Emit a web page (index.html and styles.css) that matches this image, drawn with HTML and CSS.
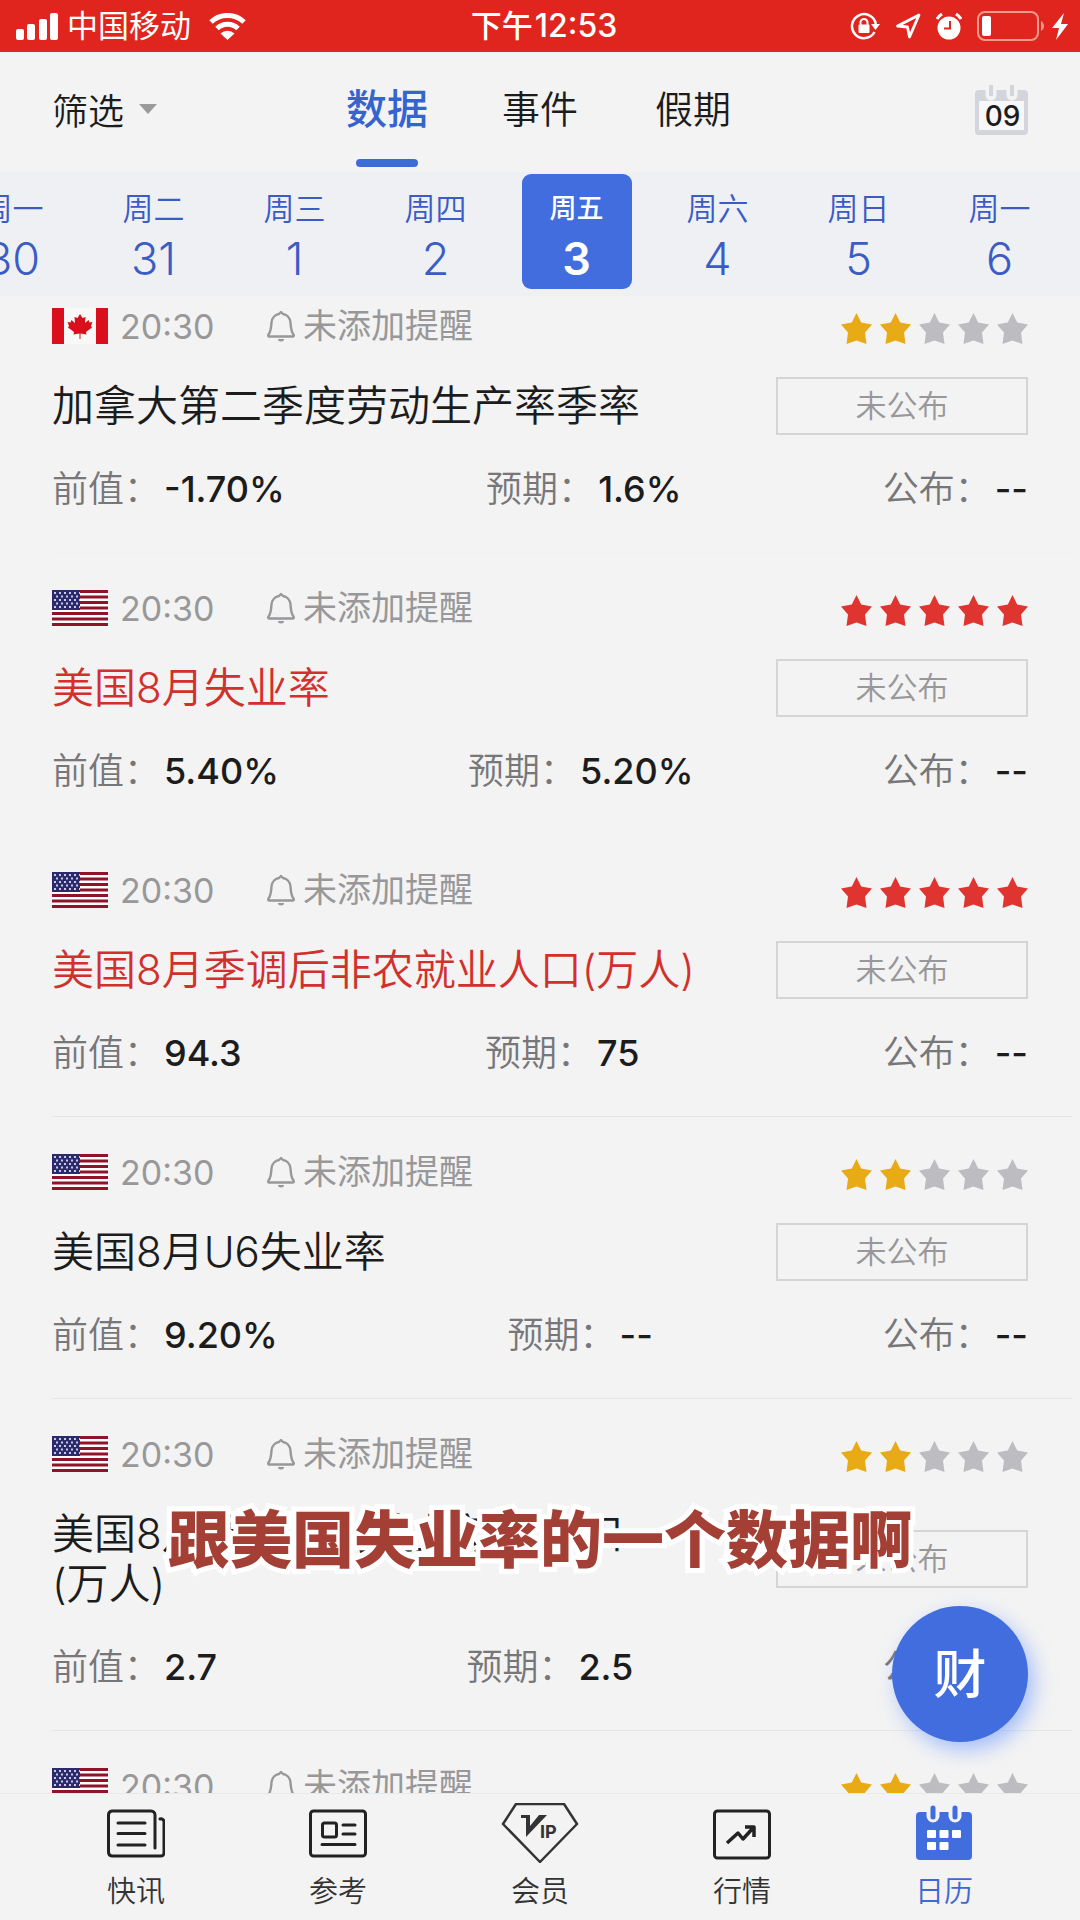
FILE: index.html
```html
<!DOCTYPE html>
<html lang="zh-CN">
<head>
<meta charset="utf-8">
<meta name="viewport" content="width=device-width, initial-scale=1">
<title>财经日历</title>
<link rel="stylesheet" href="styles.css">
</head>
<body>
<svg class="defs" aria-hidden="true">
  <symbol id="bell" viewBox="0 0 28 32"><path d="M2 26.500C1 26.500 1 25.500 1.500 24.500C4 21.500 4 18 4.500 12.500C5 7.500 8.500 4.500 12 4L14 2L16 4C19.500 4.500 23 7.500 23.500 12.500C24 18 24 21.500 26.500 24.500C27 25.500 27 26.500 26 26.500Z" fill="none" stroke="#98989a" stroke-width="2.400" stroke-linejoin="round"/><path d="M11 29H17A3 2.500 0 0 1 11 29Z" fill="#98989a"/></symbol>
  <symbol id="star" viewBox="0 0 31 31"><path d="M15.500 0L20.200 9.500L31 11.500L24 19.500L25.500 31L15.500 27.500L5.500 31L7 19.500L0 11.500L10.800 9.500Z" fill="currentColor"/></symbol>
  <symbol id="us" viewBox="0 0 56 36"><rect width="56" height="36" fill="#fff"/><path d="M0 1.500H56M0 7H56M0 12.500H56M0 18H56M0 23.500H56M0 29H56M0 34.500H56" stroke="#8f1329" stroke-width="3"/><rect width="28" height="20" fill="#2b2a6b"/><path d="M2 3H28M4 6.500H28M2 10H28M4 13.500H28M2 17H28" stroke="#c9c9ea" stroke-width="2" stroke-dasharray="2 3"/></symbol>
  <symbol id="ca" viewBox="0 0 56 36"><rect width="56" height="36" fill="#f8f8f8"/><path d="M0 0H12V36H0ZM44 0H56V36H44Z" fill="#d90f1c"/><path d="M28 6L30.500 10L33.500 9L33 15L36.500 12L37.500 14.500L40.500 14L39 18L40 19.500L34 24L34.500 26.500L28.500 25.500V31H27.500V25.500L21.500 26.500L22 24L16 19.500L17 18L15.500 14L18.500 14.500L19.500 12L23 15L22.500 9L25.500 10Z" fill="#d90f1c"/></symbol>
</svg>

<div class="app">
  <div class="status">
    <div class="status-left">
      <svg width="43" height="27" viewBox="0 0 43 27" fill="#fff"><rect y="16" width="8" height="11" rx="2"/><rect x="11" y="11" width="8" height="16" rx="2"/><rect x="23" y="6" width="8" height="21" rx="2"/><rect x="34" width="8" height="27" rx="2"/></svg>
      <span class="carrier">中国移动</span>
      <svg width="37" height="27" viewBox="0 0 37 27"><path d="M2 9A24 24 0 0 1 35 9M8 15.500A15 15 0 0 1 29 15.500" fill="none" stroke="#fff" stroke-width="5"/><path d="M18.500 27L11.500 20.500A10 10 0 0 1 25.500 20.500Z" fill="#fff"/></svg>
    </div>
    <span class="clock">下午<span class="clock-time">12:53</span></span>
    <div class="status-right">
      <svg width="30" height="28" viewBox="0 0 30 28"><path d="M24.500 20A12 12 0 1 1 25.800 12" fill="none" stroke="#fff" stroke-width="2.500"/><path d="M21 12H30L25.500 18Z" fill="#fff"/><rect x="8.500" y="12.500" width="11" height="8.500" rx="1" fill="#fff"/><path d="M10.500 13V10.500A3.500 3.500 0 0 1 17.500 10.500V13" fill="none" stroke="#fff" stroke-width="2"/></svg>
      <svg width="26" height="26" viewBox="0 0 26 26"><path d="M24 2L2.500 13L12.500 14L14.500 24Z" fill="none" stroke="#fff" stroke-width="2.800" stroke-linejoin="round"/></svg>
      <svg width="26" height="27" viewBox="0 0 26 27"><circle cx="13" cy="15" r="11.500" fill="#fff"/><path d="M1 6A14 14 0 0 1 6 1M20 1A14 14 0 0 1 25 6" fill="none" stroke="#fff" stroke-width="3"/><path d="M14 8V15.500H8" fill="none" stroke="#df251d" stroke-width="2"/></svg>
      <svg width="68" height="30" viewBox="0 0 68 30"><rect x="1" y="1" width="60" height="28" rx="7" fill="none" stroke="#f49a8c" stroke-width="2"/><rect x="5" y="5" width="9" height="20" rx="2" fill="#fff"/><path d="M64 10C68 12 68 18 64 20Z" fill="#f49a8c"/></svg>
      <svg width="16" height="27" viewBox="0 0 16 27"><path d="M12 0L0 15H7L4 27L16 11H9Z" fill="#fff"/></svg>
    </div>
  </div>

  <header class="header">
    <button class="filter" type="button">筛选<svg width="18" height="10" viewBox="0 0 18 10"><path d="M0 0H18L9 10Z" fill="#9a9a9a"/></svg></button>
    <nav class="tabs">
      <a class="tab tab-on" href="#data">数据</a>
      <a class="tab" href="#events">事件</a>
      <a class="tab" href="#holidays">假期</a>
    </nav>
    <button class="month" type="button" aria-label="选择月份">
      <svg width="53" height="51" viewBox="0 0 53 51"><rect y="6" width="53" height="45" rx="4" fill="#d4d4dd"/><rect x="4" y="17" width="45" height="29" fill="#f7f7fa"/><path d="M16 0V11M37 0V11" stroke="#f3f3f3" stroke-width="11" stroke-linecap="round"/><path d="M16 1V12M37 1V12" stroke="#d4d4dd" stroke-width="4"/></svg>
      <span class="month-number">09</span>
    </button>
  </header>

  <div class="days">
    <button class="day" type="button"><span>周一</span><b>30</b></button>
    <button class="day" type="button"><span>周二</span><b>31</b></button>
    <button class="day" type="button"><span>周三</span><b>1</b></button>
    <button class="day" type="button"><span>周四</span><b>2</b></button>
    <button class="day day-on" type="button"><span>周五</span><b>3</b></button>
    <button class="day" type="button"><span>周六</span><b>4</b></button>
    <button class="day" type="button"><span>周日</span><b>5</b></button>
    <button class="day" type="button"><span>周一</span><b>6</b></button>
  </div>

  <main class="list">
    <article class="item item-plain">
      <div class="meta"><svg class="flag"><use href="#ca"/></svg><time>20:30</time><button class="remind" type="button"><svg class="bell"><use href="#bell"/></svg>未添加提醒</button>
        <div class="stars gold"><svg><use href="#star"/></svg><svg><use href="#star"/></svg><svg class="off"><use href="#star"/></svg><svg class="off"><use href="#star"/></svg><svg class="off"><use href="#star"/></svg></div></div>
      <div class="main"><h2>加拿大第二季度劳动生产率季率</h2><span class="state">未公布</span></div>
      <dl class="values"><div><dt>前值：</dt><dd>-1.70%</dd></div><div><dt>预期：</dt><dd>1.6%</dd></div><div><dt>公布：</dt><dd>--</dd></div></dl>
    </article>
    <article class="item item-plain">
      <div class="meta"><svg class="flag"><use href="#us"/></svg><time>20:30</time><button class="remind" type="button"><svg class="bell"><use href="#bell"/></svg>未添加提醒</button>
        <div class="stars red"><svg><use href="#star"/></svg><svg><use href="#star"/></svg><svg><use href="#star"/></svg><svg><use href="#star"/></svg><svg><use href="#star"/></svg></div></div>
      <div class="main"><h2 class="hot">美国8月失业率</h2><span class="state">未公布</span></div>
      <dl class="values"><div><dt>前值：</dt><dd>5.40%</dd></div><div><dt>预期：</dt><dd>5.20%</dd></div><div><dt>公布：</dt><dd>--</dd></div></dl>
    </article>
    <article class="item">
      <div class="meta"><svg class="flag"><use href="#us"/></svg><time>20:30</time><button class="remind" type="button"><svg class="bell"><use href="#bell"/></svg>未添加提醒</button>
        <div class="stars red"><svg><use href="#star"/></svg><svg><use href="#star"/></svg><svg><use href="#star"/></svg><svg><use href="#star"/></svg><svg><use href="#star"/></svg></div></div>
      <div class="main"><h2 class="hot">美国8月季调后非农就业人口<span class="unit">(万人)</span></h2><span class="state">未公布</span></div>
      <dl class="values"><div><dt>前值：</dt><dd>94.3</dd></div><div><dt>预期：</dt><dd>75</dd></div><div><dt>公布：</dt><dd>--</dd></div></dl>
    </article>
    <article class="item">
      <div class="meta"><svg class="flag"><use href="#us"/></svg><time>20:30</time><button class="remind" type="button"><svg class="bell"><use href="#bell"/></svg>未添加提醒</button>
        <div class="stars gold"><svg><use href="#star"/></svg><svg><use href="#star"/></svg><svg class="off"><use href="#star"/></svg><svg class="off"><use href="#star"/></svg><svg class="off"><use href="#star"/></svg></div></div>
      <div class="main"><h2>美国8月U6失业率</h2><span class="state">未公布</span></div>
      <dl class="values"><div><dt>前值：</dt><dd>9.20%</dd></div><div><dt>预期：</dt><dd>--</dd></div><div><dt>公布：</dt><dd>--</dd></div></dl>
    </article>
    <article class="item">
      <div class="meta"><svg class="flag"><use href="#us"/></svg><time>20:30</time><button class="remind" type="button"><svg class="bell"><use href="#bell"/></svg>未添加提醒</button>
        <div class="stars gold"><svg><use href="#star"/></svg><svg><use href="#star"/></svg><svg class="off"><use href="#star"/></svg><svg class="off"><use href="#star"/></svg><svg class="off"><use href="#star"/></svg></div></div>
      <div class="main"><h2>美国8月季调后制造业就业人口<br>(万人)</h2><span class="state">未公布</span></div>
      <dl class="values"><div><dt>前值：</dt><dd>2.7</dd></div><div><dt>预期：</dt><dd>2.5</dd></div><div><dt>公布：</dt><dd>--</dd></div></dl>
    </article>
    <article class="item">
      <div class="meta"><svg class="flag"><use href="#us"/></svg><time>20:30</time><button class="remind" type="button"><svg class="bell"><use href="#bell"/></svg>未添加提醒</button>
        <div class="stars gold"><svg><use href="#star"/></svg><svg><use href="#star"/></svg><svg class="off"><use href="#star"/></svg><svg class="off"><use href="#star"/></svg><svg class="off"><use href="#star"/></svg></div></div>
    </article>
  </main>

  <nav class="bottom">
    <a href="#news"><svg width="58" height="60" viewBox="0 1 58 60" fill="none" stroke="#222" stroke-width="3" stroke-linecap="round" stroke-linejoin="round"><path d="M48 46V13A4 4 0 0 0 44 9H5A4 4 0 0 0 1.500 13V50A4 4 0 0 0 5 54H54A3 3 0 0 0 57 51V20A3 3 0 0 0 53 17"/><path d="M11 21H38M11 31.500H38M11 43H38"/></svg>快讯</a>
    <a href="#reference"><svg width="58" height="60" viewBox="0 1 58 60" fill="none" stroke="#222" stroke-width="3" stroke-linecap="round" stroke-linejoin="round"><rect x="1.500" y="9" width="55" height="45" rx="3"/><rect x="13.500" y="21" width="14" height="14" rx="2"/><path d="M34 23H46M34 32H46M13 42.500H46"/></svg>参考</a>
    <a href="#member"><svg width="78" height="60" viewBox="0 1 78 60"><path d="M15 2H63L76 22L39 60L2 22Z" fill="none" stroke="#333" stroke-width="2.500" stroke-linejoin="round"/><path d="M20 13H29V24L38 13H46L25 35V16H20Z" fill="#333"/><text x="39" y="36" class="vip">IP</text></svg>会员</a>
    <a href="#market"><svg width="58" height="60" viewBox="0 1 58 60" fill="none" stroke="#222" stroke-width="3" stroke-linejoin="round"><rect x="1.500" y="9" width="55" height="47" rx="3"/><path d="M14 41L25 31L30 37L41 25M32 25H41V35" stroke-width="3.500"/></svg>行情</a>
    <a class="nav-on" href="#calendar"><svg width="58" height="60" viewBox="0 1 58 60"><rect x="1" y="10" width="56" height="48" rx="4" fill="#426dde"/><path d="M18 6V14M40 6V14" stroke="#f3f3f3" stroke-width="13" stroke-linecap="round"/><path d="M18 6V15M40 6V15" stroke="#426dde" stroke-width="5" stroke-linecap="round"/><path d="M13 29H20V35H13ZM25.500 29H32.500V35H25.500ZM38 29H45V35H38ZM13 41H20V47H13ZM25.500 41H32.500V47H25.500Z" fill="#fff" stroke="#fff" stroke-width="2" stroke-linejoin="round"/></svg>日历</a>
  </nav>

  <button class="fab" type="button">财</button>
  <p class="caption">跟美国失业率的一个数据啊</p>
</div>
</body>
</html>
```
FILE: styles.css
```css
* { box-sizing: border-box; }
body {
  margin: 0;
  background: #f3f3f3;
  color: #1c1c1c;
  font-family: Inter, "Noto Sans CJK SC", sans-serif;
  font-weight: 350;
}
button {
  margin: 0;
  padding: 0;
  border: 0;
  background: none;
  color: inherit;
  font: inherit;
}
a { color: inherit; text-decoration: none; }
svg { display: block; flex: none; }
.defs { position: absolute; width: 0; height: 0; }

.app {
  position: relative;
  display: flex;
  flex-direction: column;
  height: 100vh;
  overflow: hidden;
}

.status {
  flex: none;
  display: grid;
  grid-template-columns: 1fr auto 1fr;
  align-items: center;
  height: 52px;
  padding: 0 12px 0 16px;
  background: #df251d;
  color: #fff;
  font-size: 31px;
  font-weight: 400;
  line-height: 52px;
}
.status-left, .status-right { display: flex; align-items: center; }
.status-left { gap: 8px; }
.carrier { margin-right: 10px; }
.status-right { justify-content: flex-end; gap: 15px; }
.status-right svg:last-child { margin-left: -8px; }
.clock { display: flex; gap: 2px; padding-left: 4px; font-weight: 500; }
.clock-time { font-size: 32px; }

.header {
  flex: none;
  display: grid;
  grid-template-columns: 1fr auto 1fr;
  height: 120px;
  padding: 0 52px;
}
.filter {
  display: flex;
  align-items: center;
  justify-self: start;
  gap: 15px;
  height: 114px;
  font-size: 36px;
}
.tabs { display: grid; grid-template-columns: repeat(3, 153px); }
.tab {
  display: flex;
  justify-content: center;
  height: 115px;
  font-size: 38px;
  line-height: 114px;
}
.tab-on {
  position: relative;
  color: #3563d0;
  font-size: 41px;
  font-weight: 500;
}
.tab-on::after {
  content: "";
  position: absolute;
  bottom: 0;
  width: 62px;
  height: 8px;
  border-radius: 4px;
  background: #3d6cd8;
}
.month { position: relative; justify-self: end; height: 114px; }
.month-number {
  position: absolute;
  inset: 7px 0 0 2px;
  font-size: 28px;
  font-weight: 500;
  line-height: 114px;
}

.days {
  flex: none;
  display: grid;
  grid-template-columns: repeat(8, 1fr);
  justify-items: center;
  height: 124px;
  padding: 2px 10px 7px 0;
  margin-left: -58px;
  background: #eef0f4;
  color: #3a5cc4;
}
.day {
  display: flex;
  flex-direction: column;
  align-items: center;
  width: 110px;
  padding-top: 14px;
  border-radius: 9px;
  font-size: 31px;
  line-height: 42px;
}
.day b { font-size: 45px; font-weight: 350; line-height: 58px; }
.day-on { background: #426dde; color: #fff; font-size: 27px; font-weight: 500; }
.day-on b { font-weight: 600; }

.list { flex: 1; min-height: 0; overflow: hidden; }
.item {
  margin: 0 8px 0 52px;
  padding: 35px 44px 41px 0;
  border-bottom: 1px solid #e6e6e6;
}
.item-plain { border-color: #f1f1f1; }
.item:first-child { padding-top: 10px; }
.meta { display: flex; align-items: center; height: 40px; color: #98989a; font-size: 34px; font-weight: 400; }
.flag { width: 56px; height: 36px; }
.meta time { width: 147px; margin-left: 12px; }
.remind { display: flex; align-items: center; gap: 8px; line-height: 38px; }
.bell { width: 28px; height: 32px; }
.stars { display: flex; gap: 8px; margin-left: auto; padding-top: 4px; }
.stars svg { width: 31px; height: 31px; }
.gold { color: #e8ab16; }
.red { color: #e03430; }
.stars .off { color: #bdbcc0; }
.main {
  display: flex;
  align-items: center;
  justify-content: space-between;
  gap: 30px;
  margin: 31px 0 32px;
}
.main h2 { margin: 0; padding: 4px 0; font-size: 42px; font-weight: 350; line-height: 50px; }
.main .hot { color: #d2302c; }
.unit { display: inline-block; }
.state {
  flex: none;
  width: 252px;
  border: 2px solid #d5d5d7;
  color: #98989a;
  font-size: 31px;
  line-height: 54px;
  text-align: center;
}
.values { display: flex; justify-content: space-between; margin: 0; font-size: 36px; line-height: 44px; }
.values div { display: flex; }
.values dt { color: #77777a; }
.values dd { margin: 0; padding-left: 4px; font-weight: 500; }

.bottom {
  flex: none;
  display: grid;
  grid-template-columns: repeat(5, 1fr);
  height: 127px;
  padding: 9px 35px 0;
  border-top: 1px solid #e9e9e9;
  color: #333;
  font-size: 29px;
  line-height: 40px;
}
.bottom a { display: flex; flex-direction: column; align-items: center; gap: 9px; }
.bottom .nav-on { color: #3f68d6; }
.vip { font-size: 18px; font-weight: 700; fill: #333; }

.fab {
  position: absolute;
  right: 52px;
  bottom: 178px;
  width: 136px;
  height: 136px;
  padding-bottom: 6px;
  border-radius: 50%;
  background: #426dde;
  box-shadow: 6px 8px 20px #6f9bff99;
  color: #fff;
  font-size: 53px;
  font-weight: 500;
}
.caption {
  position: absolute;
  right: 0;
  bottom: 334px;
  left: 0;
  margin: 0;
  color: #a33f35;
  font-size: 62px;
  font-weight: 900;
  line-height: 90px;
  text-align: center;
  -webkit-text-stroke: 10px #fff;
  paint-order: stroke fill;
}
```
